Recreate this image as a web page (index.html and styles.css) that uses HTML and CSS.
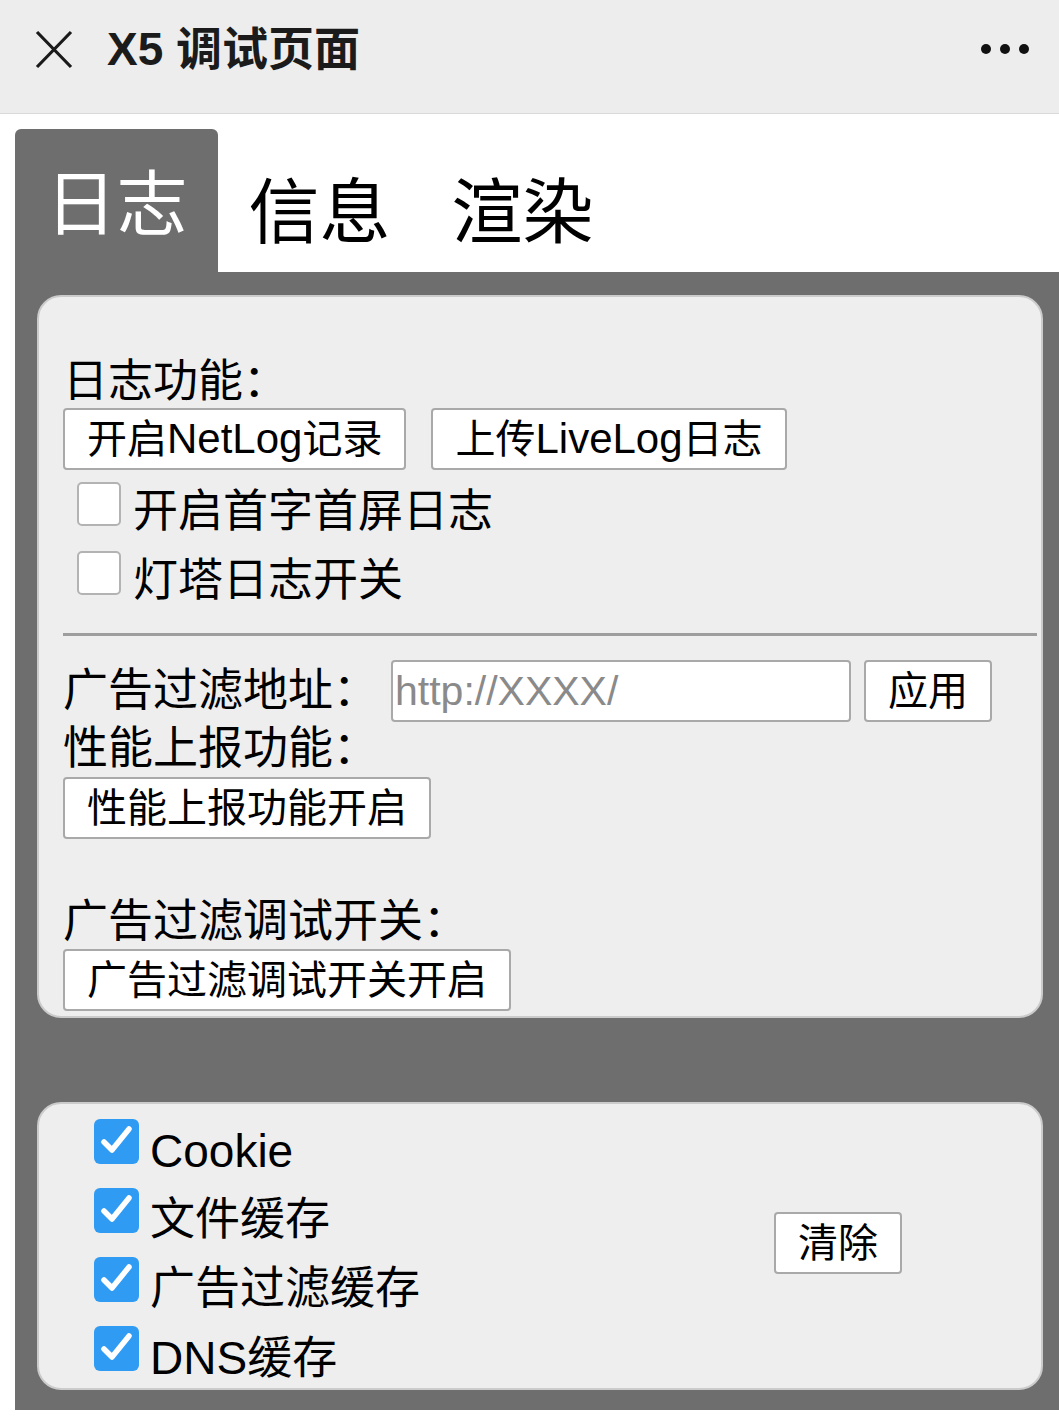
FILE: index.html
```html
<!DOCTYPE html>
<html lang="zh-CN">
<head>
<meta charset="utf-8">
<title>X5 调试页面</title>
<link rel="stylesheet" href="styles.css">
</head>
<body>
<header class="topbar">
  <span class="close-icon">
    <svg width="38" height="39" viewBox="0 0 38 39"><path d="M2 2 L36 37 M36 2 L2 37" stroke="#1a1a1a" stroke-width="3.2" fill="none"/></svg>
  </span>
  <h1 class="title">X5 调试页面</h1>
  <span class="more"><i></i><i></i><i></i></span>
</header>

<main class="debug">
  <nav class="tabs">
    <span class="tab active">日志</span>
    <span class="tab">信息</span>
    <span class="tab">渲染</span>
  </nav>
  <section class="tab-body">
    <div class="panel panel-log">
      <div class="label first">日志功能：</div>
      <div class="btn-row">
        <button class="btn">开启<span class="lat">NetLog</span>记录</button>
        <button class="btn">上传<span class="lat">LiveLog</span>日志</button>
      </div>
      <label class="check-row"><span class="box"></span><span class="check-text">开启首字首屏日志</span></label>
      <label class="check-row"><span class="box"></span><span class="check-text">灯塔日志开关</span></label>
      <hr class="divider">
      <div class="addr-row">
        <span class="label">广告过滤地址：</span>
        <input class="addr" type="text" placeholder="http://XXXX/">
        <button class="btn">应用</button>
      </div>
      <div class="label mid">性能上报功能：</div>
      <div class="btn-row"><button class="btn">性能上报功能开启</button></div>
      <div class="label spaced">广告过滤调试开关：</div>
      <div class="btn-row"><button class="btn">广告过滤调试开关开启</button></div>
    </div>

    <div class="panel panel-cache">
      <div class="cache-list">
        <label class="check-row cache"><span class="box on"><svg width="45" height="45" viewBox="0 0 45 45"><rect width="45" height="45" rx="6" fill="#2f9bf3"/><path d="M10 23 L18 31 L35 10" stroke="#fff" stroke-width="5.5" fill="none" stroke-linecap="round" stroke-linejoin="round"/></svg></span><span class="check-text"><span class="lat">Cookie</span></span></label>
        <label class="check-row cache"><span class="box on"><svg width="45" height="45" viewBox="0 0 45 45"><rect width="45" height="45" rx="6" fill="#2f9bf3"/><path d="M10 23 L18 31 L35 10" stroke="#fff" stroke-width="5.5" fill="none" stroke-linecap="round" stroke-linejoin="round"/></svg></span><span class="check-text">文件缓存</span></label>
        <label class="check-row cache"><span class="box on"><svg width="45" height="45" viewBox="0 0 45 45"><rect width="45" height="45" rx="6" fill="#2f9bf3"/><path d="M10 23 L18 31 L35 10" stroke="#fff" stroke-width="5.5" fill="none" stroke-linecap="round" stroke-linejoin="round"/></svg></span><span class="check-text">广告过滤缓存</span></label>
        <label class="check-row cache"><span class="box on"><svg width="45" height="45" viewBox="0 0 45 45"><rect width="45" height="45" rx="6" fill="#2f9bf3"/><path d="M10 23 L18 31 L35 10" stroke="#fff" stroke-width="5.5" fill="none" stroke-linecap="round" stroke-linejoin="round"/></svg></span><span class="check-text"><span class="lat">DNS</span>缓存</span></label>
      </div>
      <div class="cache-action"><button class="btn">清除</button></div>
    </div>
  </section>
</main>
</body>
</html>
```

FILE: styles.css
```css
* { box-sizing: border-box; }

html, body {
  margin: 0;
  padding: 0;
  background: #ffffff;
  font-family: "Liberation Sans", "Noto Sans CJK SC", sans-serif;
  color: #000;
}

/* ---------- top bar ---------- */
.topbar {
  height: 114px;
  background: #ededed;
  border-bottom: 1px solid #d9d9d9;
  display: flex;
  align-items: center;
  padding-bottom: 15px;
}
.close-icon {
  display: flex;
  margin-left: 35px;
}
.title {
  margin: 0 0 0 34px;
  font-size: 46px;
  line-height: 46px;
  font-weight: 700;
  color: #1b1b1b;
}
.more {
  margin-left: auto;
  margin-right: 30px;
  display: flex;
  gap: 9px;
}
.more i {
  display: block;
  width: 10px;
  height: 10px;
  border-radius: 50%;
  background: #111;
}

/* ---------- tabs ---------- */
.debug {
  margin: 15px 0 0 15px;
}
.tabs {
  display: flex;
  height: 143px;
}
.tab {
  font-size: 71px;
  padding: 24px 30.5px 0;
  line-height: 119px;
  color: #000;
}
.tab.active {
  background: #6e6e6e;
  color: #fff;
  border-radius: 6px 6px 0 0;
  padding-top: 8px;
  line-height: 135px;
}

.tab-body {
  background: #6e6e6e;
  padding: 23px 16px 20px 22px;
}

/* ---------- panels ---------- */
.panel {
  background: #eeeeee;
  border: 2px solid #cbcbcb;
  border-radius: 24px;
}
.panel-log {
  padding: 60px 4px 5px 24px;
}

.label {
  font-size: 45px;
  line-height: 54px;
  white-space: nowrap;
}
.label.first { line-height: 50px; }
.label.spaced { margin-top: 57px; line-height: 52px; }

.btn-row {
  display: flex;
  gap: 25px;
  margin-top: 1px;
}
.btn {
  font-family: inherit;
  font-size: 40px;
  color: #000;
  background: #fff;
  border: 2px solid #a9a9a9;
  border-radius: 4px;
  height: 62px;
  line-height: 58px;
  padding: 0 22px;
  margin: 0;
  white-space: nowrap;
}
.btn .lat {
  font-size: 42px;
}

.check-row {
  display: flex;
  align-items: flex-start;
  height: 69px;
}
.panel-log .check-row:first-of-type { margin-top: 6px; }
.box {
  flex: none;
  width: 44px;
  height: 44px;
  margin: 6px 0 0 14px;
  background: #fff;
  border: 2px solid #b3b3b3;
  border-radius: 5px;
}
.check-text {
  font-size: 45px;
  line-height: 66px;
  margin: 3px 0 0 12px;
  white-space: nowrap;
}
.check-text .lat {
  font-size: 46px;
}

.divider {
  border: none;
  height: 3px;
  background: #9d9d9d;
  margin: 19px 0 0 0;
}

.addr-row {
  display: flex;
  align-items: center;
  margin-top: 24px;
}
.addr-row .label {
  width: 328px;
}
.addr {
  width: 460px;
  height: 62px;
  border: 2px solid #a9a9a9;
  border-radius: 4px;
  background: #fff;
  font-family: inherit;
  font-size: 41px;
  padding: 0 2px;
  margin: 0 13px 0 0;
  color: #000;
  outline: none;
}
.addr::placeholder {
  color: #8a8a8a;
}

/* ---------- cache panel ---------- */
.panel-cache {
  margin-top: 84px;
  padding: 8px 0 0 24px;
  display: flex;
}
.cache-list {
  width: 711px;
  flex: none;
}
.check-row.cache .box {
  width: 45px;
  height: 45px;
  margin: 7px 0 0 31px;
  border: none;
  background: none;
  display: flex;
}
.check-row.cache .check-text {
  margin: 6px 0 0 11px;
}
.cache-action {
  align-self: center;
  margin-bottom: 14px;
}
```
